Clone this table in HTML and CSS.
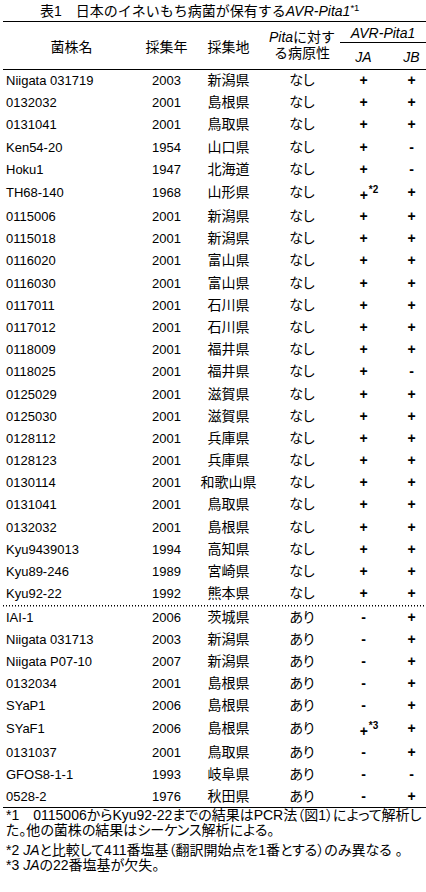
FILE: index.html
```html
<!DOCTYPE html>
<html lang="ja">
<head>
<meta charset="utf-8">
<title>表1 日本のイネいもち病菌が保有するAVR-Pita1</title>
<link rel="stylesheet" href="styles.css">
</head>
<body>
<h1 class="title">表1　日本のイネいもち病菌が保有する<i>AVR-Pita1</i><sup>*1</sup></h1>
<div class="table">
  <div class="head">
    <div class="h h-name">菌株名</div>
    <div class="h h-year">採集年</div>
    <div class="h h-place">採集地</div>
    <div class="h h-pita"><span><i>Pita</i>に対す</span><span>る病原性</span></div>
    <div class="h h-avr"><i>AVR-Pita1</i></div>
    <div class="h h-ja"><i>JA</i></div>
    <div class="h h-jb"><i>JB</i></div>
  </div>
  <div class="group group1">
    <div class="row"><div class="c name">Niigata 031719</div><div class="c">2003</div><div class="c jp">新潟県</div><div class="c kana">なし</div><div class="c m">+</div><div class="c m jb">+</div></div>
    <div class="row"><div class="c name">0132032</div><div class="c">2001</div><div class="c jp">島根県</div><div class="c kana">なし</div><div class="c m">+</div><div class="c m jb">+</div></div>
    <div class="row"><div class="c name">0131041</div><div class="c">2001</div><div class="c jp">鳥取県</div><div class="c kana">なし</div><div class="c m">+</div><div class="c m jb">+</div></div>
    <div class="row"><div class="c name">Ken54-20</div><div class="c">1954</div><div class="c jp">山口県</div><div class="c kana">なし</div><div class="c m">+</div><div class="c m jb">-</div></div>
    <div class="row"><div class="c name">Hoku1</div><div class="c">1947</div><div class="c jp">北海道</div><div class="c kana">なし</div><div class="c m">+</div><div class="c m jb">-</div></div>
    <div class="row tall"><div class="c name">TH68-140</div><div class="c">1968</div><div class="c jp">山形県</div><div class="c kana">なし</div><div class="c m low">+<sup class="fn">*2</sup></div><div class="c m jb">+</div></div>
    <div class="row"><div class="c name">0115006</div><div class="c">2001</div><div class="c jp">新潟県</div><div class="c kana">なし</div><div class="c m">+</div><div class="c m jb">+</div></div>
    <div class="row"><div class="c name">0115018</div><div class="c">2001</div><div class="c jp">新潟県</div><div class="c kana">なし</div><div class="c m">+</div><div class="c m jb">+</div></div>
    <div class="row"><div class="c name">0116020</div><div class="c">2001</div><div class="c jp">富山県</div><div class="c kana">なし</div><div class="c m">+</div><div class="c m jb">+</div></div>
    <div class="row"><div class="c name">0116030</div><div class="c">2001</div><div class="c jp">富山県</div><div class="c kana">なし</div><div class="c m">+</div><div class="c m jb">+</div></div>
    <div class="row"><div class="c name">0117011</div><div class="c">2001</div><div class="c jp">石川県</div><div class="c kana">なし</div><div class="c m">+</div><div class="c m jb">+</div></div>
    <div class="row"><div class="c name">0117012</div><div class="c">2001</div><div class="c jp">石川県</div><div class="c kana">なし</div><div class="c m">+</div><div class="c m jb">+</div></div>
    <div class="row"><div class="c name">0118009</div><div class="c">2001</div><div class="c jp">福井県</div><div class="c kana">なし</div><div class="c m">+</div><div class="c m jb">+</div></div>
    <div class="row"><div class="c name">0118025</div><div class="c">2001</div><div class="c jp">福井県</div><div class="c kana">なし</div><div class="c m">+</div><div class="c m jb">-</div></div>
    <div class="row"><div class="c name">0125029</div><div class="c">2001</div><div class="c jp">滋賀県</div><div class="c kana">なし</div><div class="c m">+</div><div class="c m jb">+</div></div>
    <div class="row"><div class="c name">0125030</div><div class="c">2001</div><div class="c jp">滋賀県</div><div class="c kana">なし</div><div class="c m">+</div><div class="c m jb">+</div></div>
    <div class="row"><div class="c name">0128112</div><div class="c">2001</div><div class="c jp">兵庫県</div><div class="c kana">なし</div><div class="c m">+</div><div class="c m jb">+</div></div>
    <div class="row"><div class="c name">0128123</div><div class="c">2001</div><div class="c jp">兵庫県</div><div class="c kana">なし</div><div class="c m">+</div><div class="c m jb">+</div></div>
    <div class="row"><div class="c name">0130114</div><div class="c">2001</div><div class="c jp">和歌山県</div><div class="c kana">なし</div><div class="c m">+</div><div class="c m jb">+</div></div>
    <div class="row"><div class="c name">0131041</div><div class="c">2001</div><div class="c jp">鳥取県</div><div class="c kana">なし</div><div class="c m">+</div><div class="c m jb">+</div></div>
    <div class="row"><div class="c name">0132032</div><div class="c">2001</div><div class="c jp">島根県</div><div class="c kana">なし</div><div class="c m">+</div><div class="c m jb">+</div></div>
    <div class="row"><div class="c name">Kyu9439013</div><div class="c">1994</div><div class="c jp">高知県</div><div class="c kana">なし</div><div class="c m">+</div><div class="c m jb">+</div></div>
    <div class="row"><div class="c name">Kyu89-246</div><div class="c">1989</div><div class="c jp">宮崎県</div><div class="c kana">なし</div><div class="c m">+</div><div class="c m jb">+</div></div>
    <div class="row"><div class="c name">Kyu92-22</div><div class="c">1992</div><div class="c jp">熊本県</div><div class="c kana">なし</div><div class="c m">+</div><div class="c m jb">+</div></div>
  </div>
  <div class="group group2">
    <div class="row"><div class="c name">IAI-1</div><div class="c">2006</div><div class="c jp">茨城県</div><div class="c kana">あり</div><div class="c m">-</div><div class="c m jb">+</div></div>
    <div class="row"><div class="c name">Niigata 031713</div><div class="c">2003</div><div class="c jp">新潟県</div><div class="c kana">あり</div><div class="c m">-</div><div class="c m jb">+</div></div>
    <div class="row"><div class="c name">Niigata P07-10</div><div class="c">2007</div><div class="c jp">新潟県</div><div class="c kana">あり</div><div class="c m">-</div><div class="c m jb">+</div></div>
    <div class="row"><div class="c name">0132034</div><div class="c">2001</div><div class="c jp">島根県</div><div class="c kana">あり</div><div class="c m">-</div><div class="c m jb">+</div></div>
    <div class="row"><div class="c name">SYaP1</div><div class="c">2006</div><div class="c jp">島根県</div><div class="c kana">あり</div><div class="c m">-</div><div class="c m jb">+</div></div>
    <div class="row tall"><div class="c name">SYaF1</div><div class="c">2006</div><div class="c jp">島根県</div><div class="c kana">あり</div><div class="c m low">+<sup class="fn">*3</sup></div><div class="c m jb">+</div></div>
    <div class="row"><div class="c name">0131037</div><div class="c">2001</div><div class="c jp">鳥取県</div><div class="c kana">あり</div><div class="c m">-</div><div class="c m jb">+</div></div>
    <div class="row"><div class="c name">GFOS8-1-1</div><div class="c">1993</div><div class="c jp">岐阜県</div><div class="c kana">あり</div><div class="c m">-</div><div class="c m jb">-</div></div>
    <div class="row"><div class="c name">0528-2</div><div class="c">1976</div><div class="c jp">秋田県</div><div class="c kana">あり</div><div class="c m">-</div><div class="c m jb">+</div></div>
  </div>
</div>
<div class="notes">
  <p class="note note1">*1　0115006からKyu92-22までの結果はPCR法（図1）によって解析し<br>た。他の菌株の結果はシーケンス解析による。</p>
  <p class="note note2">*2 <i>JA</i>と比較して411番塩基（翻訳開始点を1番とする）のみ異なる 。<br>*3 <i>JA</i>の22番塩基が欠失。</p>
</div>
</body>
</html>
```

FILE: styles.css
```css
* { box-sizing: border-box; }
html, body { margin: 0; padding: 0; background: #fff; }
body {
  width: 426px;
  overflow: hidden;
  color: #000;
  font-family: "Liberation Sans", "Noto Sans CJK JP", sans-serif;
}

.title {
  margin: 0;
  height: 21px;
  padding: 2px 0 0 40px;
  font-size: 14px;
  line-height: 19px;
  font-weight: normal;
  white-space: nowrap;
}
.title sup {
  font-size: 9.5px;
  line-height: 0;
  vertical-align: 5px;
}

.table {
  --cols: 137px 53px 71px 76px 47px 39px;
  width: 423px;
  margin-left: 3px;
  border-top: 1.5px solid #000;
}

.head {
  display: grid;
  grid-template-columns: var(--cols);
  grid-template-rows: 20.5px 26px;
  border-bottom: 1.5px solid #000;
  font-size: 14px;
  line-height: 16px;
}
.h {
  display: flex;
  align-items: center;
  justify-content: center;
  white-space: nowrap;
}
.h-name, .h-year, .h-place { grid-row: 1 / 3; padding-top: 4px; }
.h-name { grid-column: 1; }
.h-year { grid-column: 2; }
.h-place { grid-column: 3; }
.h-pita {
  grid-column: 4;
  grid-row: 1 / 3;
  flex-direction: column;
}
.h-avr {
  grid-column: 5 / 7;
  grid-row: 1;
  border-bottom: 1px solid #000;
  padding-top: 3px;
}
.h-ja { grid-column: 5; grid-row: 2; padding-top: 2px; }
.h-jb { grid-column: 6; grid-row: 2; padding: 2px 0 0 10px; }

.row {
  display: grid;
  grid-template-columns: var(--cols);
  align-items: center;
  height: 22.2px;
  font-size: 13px;
  line-height: 15px;
}
.group2 .row { height: 22px; }
.row.tall { height: 25px; }

.c { text-align: center; white-space: nowrap; }
.c.name { text-align: left; padding-left: 3px; }
.c.jp { font-size: 14px; }
.c.kana { font-size: 14px; font-feature-settings: "palt"; }
.c.m { font-weight: bold; font-size: 14px; }
.c.jb { padding-left: 10px; }
.c.low { padding-top: 6px; }
.fn {
  font-size: 10px;
  line-height: 0;
  vertical-align: 7px;
  margin-left: 1px;
  margin-right: -11px;
}

.group2 {
  padding-top: 1.5px;
  background: repeating-linear-gradient(90deg, #000 0 1.5px, transparent 1.5px 3px) top left / 100% 1.5px no-repeat;
  border-bottom: 1.5px solid #000;
}

.notes { padding-left: 6px; }
.note {
  margin: 0;
  font-size: 14px;
  line-height: 15px;
  font-feature-settings: "palt";
  white-space: nowrap;
}
.note1 { margin-bottom: 5px; }
```
